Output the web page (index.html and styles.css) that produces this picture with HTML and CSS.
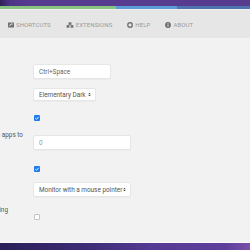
FILE: index.html
```html
<!DOCTYPE html>
<html>
<head>
<meta charset="utf-8">
<link rel="stylesheet" href="styles.css">
</head>
<body>
<div class="page">
  <div class="hdr"></div>
  <div class="strip"><span class="s-green"></span><span class="s-blue"></span><span class="s-dark"></span></div>
  <div class="sep"></div>
  <nav class="tabs">
    <div class="tab">
      <svg class="ico" viewBox="0 0 6 6"><rect x="0" y="0.5" width="6" height="5" rx="0.6" fill="#707070"/><path d="M1.3 4.2 L3 2 L4.7 2" stroke="#fff" stroke-width="0.8" fill="none"/></svg>
      <span>Shortcuts</span>
    </div>
    <div class="tab">
      <svg class="ico ico-w" viewBox="0 0 8 6"><rect x="2.6" y="0.3" width="2.8" height="2.6" fill="#707070"/><rect x="0.6" y="3.1" width="2.8" height="2.6" fill="#707070"/><rect x="4.6" y="3.1" width="2.8" height="2.6" fill="#707070"/></svg>
      <span>Extensions</span>
    </div>
    <div class="tab">
      <svg class="ico" viewBox="0 0 6 6"><circle cx="3" cy="3" r="2.3" fill="none" stroke="#707070" stroke-width="1.2"/><path d="M0.8 0.8 L2 2 M5.2 0.8 L4 2 M0.8 5.2 L2 4 M5.2 5.2 L4 4" stroke="#707070" stroke-width="1.2"/></svg>
      <span>Help</span>
    </div>
    <div class="tab">
      <svg class="ico" viewBox="0 0 6 6"><circle cx="3" cy="3" r="2.9" fill="#6a6a6a"/><rect x="2.55" y="2.4" width="0.9" height="2.3" fill="#fff"/><rect x="2.55" y="1.1" width="0.9" height="0.8" fill="#fff"/></svg>
      <span>About</span>
    </div>
  </nav>
  <main class="content">
    <div class="form">
      <div class="row r1">
        <label class="lbl lbl-h">Launcher shortcut</label>
        <div class="field w78">Ctrl+Space</div>
      </div>
      <div class="row r2">
        <label class="lbl lbl-h">Theme</label>
        <div class="select w63 h13"><span>Elementary Dark</span><svg class="arr" viewBox="0 0 4 6"><path d="M0.3 2.5 L2 0.6 L3.7 2.5 Z M0.3 3.5 L2 5.4 L3.7 3.5 Z" fill="#444"/></svg></div>
      </div>
      <div class="row r3">
        <label class="lbl lbl-h">Blur</label>
        <span class="cb on"><svg viewBox="0 0 6 6"><path d="M1.3 3.2 L2.5 4.3 L4.7 1.8" stroke="#fff" stroke-width="0.9" fill="none"/></svg></span>
      </div>
      <div class="row r4">
        <label class="lbl">Limit number of dynamic apps to</label>
        <div class="field w98 f0">0</div>
      </div>
      <div class="row r5">
        <label class="lbl lbl-h">Window</label>
        <span class="cb on"><svg viewBox="0 0 6 6"><path d="M1.3 3.2 L2.5 4.3 L4.7 1.8" stroke="#fff" stroke-width="0.9" fill="none"/></svg></span>
      </div>
      <div class="row r6">
        <label class="lbl lbl-h">Show on</label>
        <div class="select w98"><span>Monitor with a mouse pointer</span><svg class="arr" viewBox="0 0 4 6"><path d="M0.3 2.5 L2 0.6 L3.7 2.5 Z M0.3 3.5 L2 5.4 L3.7 3.5 Z" fill="#444"/></svg></div>
      </div>
      <div class="row r7">
        <label class="lbl lbl-b">Disable usage tracking</label>
        <span class="cb"></span>
      </div>
    </div>
  </main>
  <div class="foot-line"></div>
  <div class="foot"></div>
</div>
</body>
</html>
```

FILE: styles.css
```css
html, body {
  margin: 0;
  padding: 0;
}
body {
  width: 250px;
  height: 250px;
  overflow: hidden;
  font-family: Roboto, "Liberation Sans", sans-serif;
  background: #f2f2f2;
}
.page {
  display: flex;
  flex-direction: column;
  height: 250px;
}
.hdr {
  height: 6px;
  background: linear-gradient(90deg, #2f2258 0, #4e3586 10px, #563b8f 30px, #563b8f 100%);
}
.strip {
  display: flex;
  height: 3px;
}
.s-green { flex: 116 0 0; background: #86c47f; }
.s-blue { flex: 61 0 0; background: #5c9bd6; }
.s-dark { flex: 73 0 0; background: #4d74ad; }
.sep {
  height: 1px;
  background: #eeeeee;
}
.tabs {
  height: 28px;
  background: #e6e6e6;
  display: flex;
  align-items: center;
  gap: 15px;
  padding-left: 8px;
  padding-top: 1px;
  box-sizing: border-box;
}
.tab {
  display: flex;
  align-items: center;
  gap: 2px;
  font-size: 6px;
  text-transform: uppercase;
  letter-spacing: 0.1px;
  color: #9a9a9a;
}
.ico {
  width: 6px;
  height: 6px;
  flex: none;
}
.ico-w {
  width: 8px;
}
.content {
  flex: 1;
  background: #f2f2f2;
  padding-top: 26px;
}
.form {
  margin-left: -177px;
  display: flex;
  flex-direction: column;
}
.row {
  display: grid;
  grid-template-columns: 200px auto;
  column-gap: 10px;
  align-items: start;
}
.r2 { margin-top: 9px; }
.r3 { margin-top: 14px; }
.r4 { margin-top: 14px; }
.r5 { margin-top: 16px; }
.r6 { margin-top: 10px; }
.r7 { margin-top: 17px; }
.lbl {
  font-size: 6.4px;
  color: #555;
  white-space: nowrap;
  text-align: right;
  line-height: 9px;
  margin-top: -4px;
}
.lbl-h {
  visibility: hidden;
}
.lbl-b {
  margin-top: -8px;
  padding-right: 15px;
}
.field, .select {
  box-sizing: border-box;
  height: 15px;
  background: #fff;
  border: 1px solid #e6e6e6;
  border-radius: 2px;
  box-shadow: 0 1px 1px rgba(0,0,0,0.03);
  font-size: 6.4px;
  color: #666;
  display: flex;
  align-items: center;
  padding-left: 5px;
  white-space: nowrap;
  overflow: hidden;
}
.select {
  justify-content: space-between;
  padding-right: 4px;
  color: #555;
}
.w78 { width: 78px; }
.w63 { width: 63px; }
.w98 { width: 98px; }
.h13 { height: 13px; }
.f0 { color: #999; }
.arr {
  width: 3px;
  height: 5px;
  flex: none;
}
.cb {
  width: 6px;
  height: 6px;
  box-sizing: border-box;
  border: 1px solid #c4c4c4;
  border-radius: 1px;
  background: #fff;
  margin-left: 1px;
  display: block;
}
.cb.on {
  background: #1f7cf0;
  border-color: #1f7cf0;
  border-width: 0;
}
.cb svg {
  display: block;
  width: 6px;
  height: 6px;
}
.foot-line {
  height: 1px;
  background: #fafafa;
}
.foot {
  height: 7px;
  background: linear-gradient(90deg, #2a1f58 0, #3a2a72 30%, #533a92 60%, #5e3f9c 90%, #7a4fa8 100%);
}
```
